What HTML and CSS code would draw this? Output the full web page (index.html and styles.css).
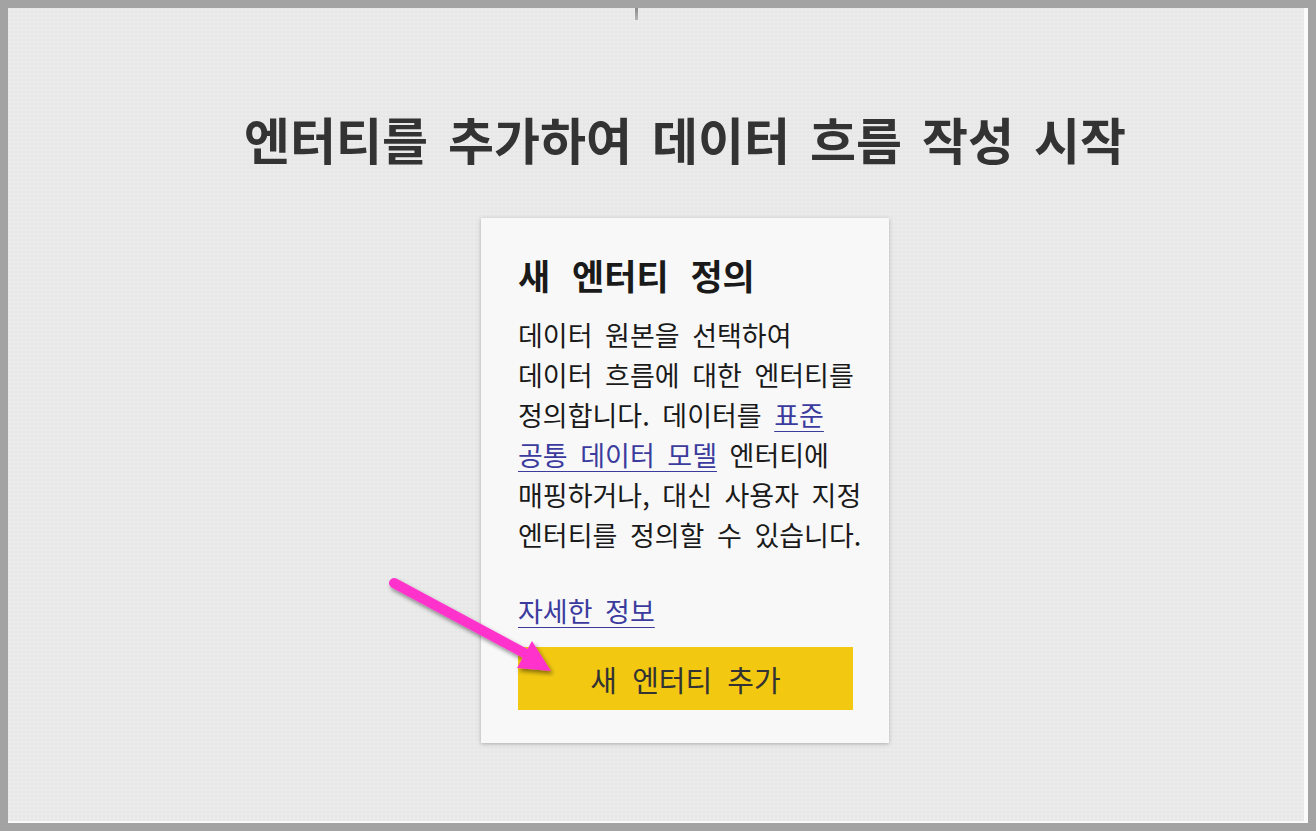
FILE: index.html
```html
<!DOCTYPE html>
<html lang="ko">
<head>
<meta charset="utf-8">
<title>엔터티 추가</title>
<link rel="stylesheet" href="styles.css">
</head>
<body>
<div class="frame">
  <div class="tick"></div>
  <main class="content">
    <h1 class="title">엔터티를 추가하여 데이터 흐름 작성 시작</h1>
    <section class="card">
      <h2 class="card-title">새 엔터티 정의</h2>
      <p class="card-text">데이터 원본을 선택하여 데이터 흐름에 대한 엔터티를 정의합니다. 데이터를 <a href="#" class="link">표준 공통 데이터 모델</a> 엔터티에 매핑하거나, 대신 사용자 지정 엔터티를 정의할 수 있습니다.</p>
      <a href="#" class="link more">자세한 정보</a>
      <button class="add-btn" type="button">새 엔터티 추가</button>
      <svg class="arrow" width="180" height="110" viewBox="0 0 180 110" aria-hidden="true">
        <defs>
          <filter id="sh" x="-20%" y="-20%" width="150%" height="160%">
            <feDropShadow dx="2" dy="3" stdDeviation="2" flood-color="#000" flood-opacity="0.45"/>
          </filter>
        </defs>
        <g filter="url(#sh)">
          <line x1="16" y1="16" x2="150" y2="88" stroke="#ff33cc" stroke-width="10" stroke-linecap="round"/>
          <polygon points="173,104 139,101 154,74" fill="#ff33cc"/>
        </g>
      </svg>
    </section>
  </main>
</div>
</body>
</html>
```

FILE: styles.css
```css
html, body {
  margin: 0;
  padding: 0;
}
body {
  background: #a3a3a3;
  padding: 8px;
  font-family: "Noto Sans CJK KR", "Noto Sans", sans-serif;
}
.frame {
  width: 1296px;
  height: 813px;
  border-right: 4px solid #fafafa;
  border-bottom: 2px solid #fafafa;
  background-color: #e8e8e8;
  background-image: radial-gradient(circle, #ececec 0.7px, transparent 1.1px);
  background-size: 4px 4px;
  display: flex;
  flex-direction: column;
}
.tick {
  width: 3px;
  height: 12px;
  margin-left: 627px;
  background: linear-gradient(#8a8a8a, #b5b5b5);
}
.content {
  display: flex;
  flex-direction: column;
  align-items: center;
  padding-left: 58px;
}
.title {
  margin: 88px 0 0;
  font-size: 50px;
  line-height: 60px;
  font-weight: 700;
  color: #333333;
  word-spacing: 6px;
  white-space: nowrap;
}
.card {
  position: relative;
  margin-top: 50px;
  width: 335px;
  padding: 32px 36px 33px 37px;
  background: #f8f8f8;
  box-shadow: 0 1px 4px rgba(0,0,0,0.25);
}
.card-title {
  margin: 0;
  font-size: 35px;
  line-height: 50px;
  font-weight: 700;
  color: #1a1a1a;
  word-spacing: 12px;
}
.card-text {
  margin: 15px 0 0;
  width: 354px;
  font-size: 27px;
  line-height: 40px;
  color: #1a1a1a;
  word-spacing: 5px;
  word-break: keep-all;
}
.link {
  color: #3b3b9e;
  text-decoration: underline;
  text-underline-offset: 5px;
  text-decoration-thickness: 1px;
}
.more {
  display: block;
  width: max-content;
  margin-top: 36px;
  font-size: 27px;
  line-height: 40px;
  word-spacing: 5px;
}
.add-btn {
  display: block;
  margin-top: 16px;
  width: 335px;
  height: 63px;
  border: none;
  background: #f2c811;
  color: #333333;
  font-family: inherit;
  font-size: 29px;
  word-spacing: 7px;
  padding: 0;
}
.arrow {
  position: absolute;
  left: -103px;
  top: 349px;
}
```
